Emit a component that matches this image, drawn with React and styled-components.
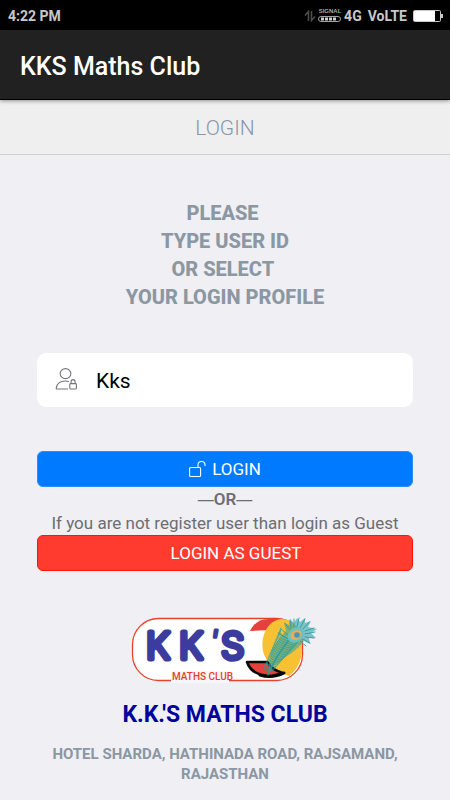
import React, { useState } from "react";
import styled, { createGlobalStyle } from "styled-components";

const GlobalStyle = createGlobalStyle`
  * { box-sizing: border-box; }
  body {
    margin: 0;
    background: #efeff4;
    font-family: Roboto, "Liberation Sans", sans-serif;
    color: #6d6d72;
  }
`;

const Screen = styled.div`
  display: flex;
  flex-direction: column;
  min-height: 100vh;
  background: #efeff4;
`;

const StatusBar = styled.div`
  display: flex;
  align-items: center;
  justify-content: space-between;
  height: 30px;
  padding: 2px 7px 0 8px;
  background: #000;
  color: #c8c8c8;
  font-size: 14px;
  line-height: 20px;
  font-weight: 700;
`;

const StatusIcons = styled.div`
  display: flex;
  align-items: center;
  gap: 2px;
`;

const NetworkLabel = styled.span`
  display: flex;
  gap: 6px;
  margin-right: 4px;
`;

const AppBar = styled.header`
  display: flex;
  align-items: center;
  height: 70px;
  padding: 4px 20px 0;
  background: #212121;
  border-bottom: 1px solid #000;
  box-shadow: 0 1px 4px rgba(0, 0, 0, 0.4);
  z-index: 1;
`;

const AppTitle = styled.h1`
  margin: 0;
  color: #fff;
  font-size: 25px;
  line-height: 32px;
  font-weight: 500;
`;

const PageBar = styled.div`
  display: flex;
  align-items: center;
  justify-content: center;
  height: 55px;
  padding-top: 2px;
  background: #efefef;
  border-bottom: 1px solid #d0d0d4;
`;

const PageTitle = styled.h2`
  margin: 0;
  color: #8a97a5;
  font-size: 21px;
  line-height: 28px;
  font-weight: 300;
`;

const Content = styled.main`
  display: flex;
  flex-direction: column;
  padding: 44px 37px 16px;
  text-align: center;
`;

const Prompt = styled.p`
  margin: 0 0 42px;
  color: #8b97a2;
  font-size: 20px;
  line-height: 28px;
  font-weight: 800;
`;

const PromptLine = styled.span`
  display: block;
  white-space: pre;
`;

const Form = styled.form`
  display: flex;
  flex-direction: column;
`;

const Field = styled.label`
  display: flex;
  align-items: center;
  gap: 18px;
  height: 54px;
  margin-bottom: 44px;
  padding: 0 18px;
  border-radius: 9px;
  background: #fff;
  color: #77777b;
`;

const FieldInput = styled.input`
  flex: 1;
  min-width: 0;
  padding: 2px 0 0;
  border: 0;
  outline: 0;
  background: transparent;
  color: #000;
  font: inherit;
  font-size: 21px;
  line-height: 28px;
`;

const Button = styled.button`
  display: flex;
  align-items: center;
  justify-content: center;
  gap: 6px;
  height: 36px;
  padding: 0 18px;
  border: 1px solid ${(p) => p.$edge};
  border-radius: 6px;
  background: ${(p) => p.$fill};
  color: #fff;
  font: inherit;
  font-size: 17px;
  line-height: 24px;
`;

const ButtonText = styled.span`
  padding-left: ${(p) => (p.$indent ? "22px" : "0")};
`;

const Note = styled.p`
  margin: 0;
  font-size: 17px;
  line-height: 24px;
  font-weight: ${(p) => (p.$strong ? 600 : 400)};
  white-space: nowrap;
`;

const Dash = styled.span`
  font-family: "Liberation Sans", sans-serif;
  font-size: 16px;
  line-height: 16px;
  font-weight: 400;
`;

const Footer = styled.footer`
  display: flex;
  flex-direction: column;
  align-items: center;
  margin: 40px -10px 0;
`;

const ClubName = styled.h3`
  margin: 9px 0 14px;
  color: #00009b;
  font-size: 23px;
  line-height: 30px;
  font-weight: 700;
`;

const Address = styled.address`
  color: #8b97a2;
  font-size: 15px;
  line-height: 20px;
  font-style: normal;
  font-weight: 700;
`;

const DataArrows = () => (
  <svg width="12" height="12" viewBox="0 0 12 12" fill="none" stroke="#4c4c4c" strokeWidth="1.6" aria-hidden="true">
    <path d="M4.5 11V1.5L1 5.5M7.5 1v9.5L11 6.5" />
  </svg>
);

const SignalIcon = () => (
  <svg width="24" height="16" viewBox="0 0 24 16" role="img" aria-label="Signal">
    <text x="12" y="5" fontSize="6" fontWeight="700" textAnchor="middle" fill="#a8a8a8" fontFamily="Liberation Sans, sans-serif">
      SIGNAL
    </text>
    <rect x="0.5" y="8.5" width="22" height="5" rx="2.5" fill="none" stroke="#a0a0a0" />
    <path d="M3 11h3M7 11h3M11 11h3M15 11h3" stroke="#d0d0d0" strokeWidth="3" />
  </svg>
);

const BatteryIcon = () => (
  <svg width="30" height="12" viewBox="0 0 30 12" role="img" aria-label="Battery">
    <rect x="0.5" y="0.5" width="27" height="11" rx="1" fill="none" stroke="#c8c8c8" />
    <rect x="1" y="1" width="21" height="10" fill="#fff" />
    <path d="M29 4v4" stroke="#c8c8c8" strokeWidth="2" />
  </svg>
);

const UserLockIcon = () => (
  <svg width="23" height="24" viewBox="0 0 23 24" fill="none" stroke="currentColor" strokeWidth="1.1" aria-hidden="true">
    <ellipse cx="10.5" cy="5.6" rx="5.4" ry="5" />
    <path d="M13 21H1.8c-.6 0-.7-.4-.5-1.2C2.2 15.4 5 13 10.5 13c1.4 0 2.6.2 3.5.5" />
    <rect x="14.8" y="15.6" width="6.6" height="5.4" rx=".8" />
    <path d="M16.1 15.6v-1.7c0-3 4-3 4 0v1.7" />
  </svg>
);

const UnlockIcon = () => (
  <svg width="17" height="18" viewBox="0 0 17 18" fill="none" stroke="currentColor" strokeWidth="1.1" aria-hidden="true">
    <rect x="0.6" y="7.5" width="11" height="9" rx="1" />
    <path d="M9 7.5V4.8C9 0.4 16 0.4 16 4.8V6" />
  </svg>
);

const barbs = Array.from({ length: 19 }, (_, i) => {
  const t = i / 18;
  return { x: 171 - 21 * t, y: 28 + 32 * t, left: 12 - 7 * t, right: 13 - 8 * t };
});

const ClubLogo = () => (
  <svg width="210" height="80" viewBox="0 0 210 80" role="img" aria-label="KK's Maths Club">
    <rect x="12.5" y="7.5" width="170" height="62" rx="26" fill="#fff" stroke="#e8412c" strokeWidth="1.3" />
    <g transform="translate(-2 0)">
      <path d="M132 20C136 12 142 8 150 8H164L152 19Z" fill="#e5403b" />
      <path d="M164 8C176 9 184 20 184 36C184 49 180 58 171 65C160 62 148 53 145 40C142 25 150 9 164 8Z" fill="#f8c134" />
      <path d="M129 51C132 60 141 65 154 65L165 62C158 60 152 56 150 51Z" fill="#e5403b" stroke="#080808" strokeWidth="2.6" strokeLinejoin="round" />
      <path d="M142 64Q154 68 166 62" fill="none" stroke="#080808" strokeWidth="3" strokeLinecap="round" />
      <path
        d="M168 20L166 12L171 14L172 8L176 12L179 7L182 11L187 7L187 12L193 10L190 16L199 18L193 22L198 27L191 27L192 33L186 30Q178 40 166 47L152 58L150 63L151 54Q152 36 168 20Z"
        fill="#2fa5a6"
        fillOpacity="0.6"
      />
      <g fill="none" stroke="#2a9da0" strokeLinecap="round">
        <path d="M176 24Q160 40 150 64" strokeWidth="1.2" />
        {barbs.map(({ x, y, left, right }) => (
          <path
            key={y}
            d={`M${x} ${y}q${-left * 0.9} ${-left * 0.1} ${-left * 0.7} ${-left * 0.9}M${x} ${y}q${right * 0.5} ${right * 0.4} ${right} ${-right * 0.1}`}
            strokeWidth="0.7"
          />
        ))}
        <path
          d="M172 19L167 12M173 17L172 9M176 16L176 8M179 16L181 7M182 17L187 8M185 18L191 11M187 20L196 17M187 23L197 21M187 26L196 27M185 28L192 32M182 30L188 35M170 24L163 18M169 27L160 22"
          strokeWidth="0.9"
        />
      </g>
      <ellipse cx="178" cy="24" rx="9" ry="7" transform="rotate(-35 178 24)" fill="#6cc1c0" />
      <ellipse cx="178" cy="24" rx="6" ry="4.6" transform="rotate(-35 178 24)" fill="#e0b05a" />
      <circle cx="179" cy="24" r="2.8" fill="#4a93ba" />
    </g>
    <g fontFamily="Inter, Roboto, sans-serif" fontSize="37" fontWeight="300" fill="#3c3c9e" stroke="#3c3c9e" strokeWidth="5" strokeLinejoin="round" strokeLinecap="round">
      <text x="26" y="48">K</text>
      <text x="59" y="48">K</text>
      <text x="90" y="40" fontSize="28" fontStyle="italic" strokeWidth="3">'</text>
      <text x="101" y="48">S</text>
    </g>
    <rect x="51" y="60" width="58" height="12" fill="#f7f7fa" />
    <text x="52" y="69" fontFamily="Roboto, Liberation Sans, sans-serif" fontSize="10" fontWeight="500" fill="#e5402c">
      MATHS CLUB
    </text>
  </svg>
);

const promptLines = ["PLEASE ", "TYPE USER ID", "OR SELECT ", "YOUR LOGIN PROFILE"];

export default function App() {
  const [userId, setUserId] = useState("Kks");

  return (
    <Screen>
      <GlobalStyle />
      <StatusBar>
        <span>4:22 PM</span>
        <StatusIcons>
          <DataArrows />
          <SignalIcon />
          <NetworkLabel>
            <span>4G</span>
            <span>VoLTE</span>
          </NetworkLabel>
          <BatteryIcon />
        </StatusIcons>
      </StatusBar>
      <AppBar>
        <AppTitle>KKS Maths Club</AppTitle>
      </AppBar>
      <PageBar>
        <PageTitle>LOGIN</PageTitle>
      </PageBar>
      <Content>
        <Prompt>
          {promptLines.map((line) => (
            <PromptLine key={line}>{line}</PromptLine>
          ))}
        </Prompt>
        <Form onSubmit={(e) => e.preventDefault()}>
          <Field>
            <UserLockIcon />
            <FieldInput aria-label="User ID" value={userId} onChange={(e) => setUserId(e.target.value)} />
          </Field>
          <Button type="submit" $fill="#007aff" $edge="#2b8cff">
            <UnlockIcon />
            <ButtonText>LOGIN</ButtonText>
          </Button>
          <Note $strong>
            <Dash>—</Dash>OR<Dash>—</Dash>
          </Note>
          <Note>If you are not register user than login as Guest</Note>
          <Button type="button" $fill="#ff3b30" $edge="#ff1408">
            <ButtonText $indent>LOGIN AS GUEST</ButtonText>
          </Button>
        </Form>
        <Footer>
          <ClubLogo />
          <ClubName>K.K.'S MATHS CLUB</ClubName>
          <Address>HOTEL SHARDA, HATHINADA ROAD, RAJSAMAND, RAJASTHAN</Address>
        </Footer>
      </Content>
    </Screen>
  );
}
